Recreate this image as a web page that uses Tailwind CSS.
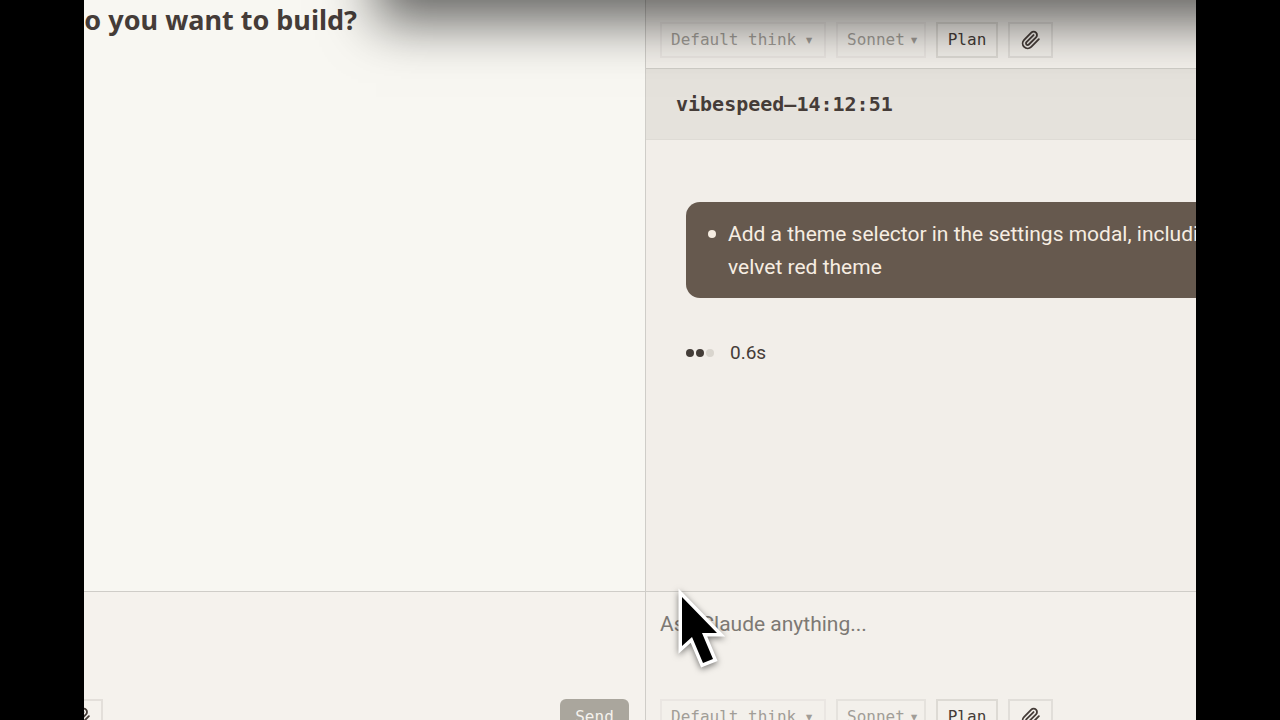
<!DOCTYPE html>
<html lang="en">
<head>
<meta charset="utf-8">
<meta name="viewport" content="width=device-width, initial-scale=1">
<title>vibespeed</title>
<script src="https://cdn.jsdelivr.net/npm/@tailwindcss/browser@4"></script>
</head>
<body class="bg-black font-['Roboto','Liberation_Sans',sans-serif] text-[#453c38]">
<svg class="hidden" aria-hidden="true">
  <symbol id="clip" viewBox="0 0 24 24" fill="none" stroke="currentColor" stroke-width="2.2" stroke-linecap="round" stroke-linejoin="round">
    <path d="m21.44 11.05-9.19 9.19a6 6 0 0 1-8.49-8.49l8.57-8.57A4 4 0 1 1 18 8.84l-8.59 8.57a2 2 0 0 1-2.83-2.83l8.49-8.48"/>
  </symbol>
</svg>
<div class="h-screen overflow-hidden px-[84px]">
  <div class="relative grid h-full grid-cols-[561fr_551fr] overflow-hidden bg-[#f8f7f2]">

    <section class="flex min-w-0 flex-col overflow-hidden">
      <div class="flex-1">
        <div class="flex w-[273px] justify-end pt-1">
          <h1 class="shrink-0 font-['Noto_Sans',sans-serif] text-[27px] leading-8 font-bold whitespace-nowrap">What do you want to build?</h1>
        </div>
      </div>
      <form class="h-[129px] shrink-0 border-t border-[#cfcdc8] bg-[#f5f2ed] pt-[107px] pr-4">
        <div class="-ml-[26px] flex justify-between">
          <button type="button" aria-label="Attach file" class="flex h-9 w-[45px] items-center justify-center border-2 border-[#9a9690]/20"><svg class="size-5"><use href="#clip"/></svg></button>
          <button type="submit" class="h-9 w-[69px] rounded-md bg-[#aaa69d] font-['DejaVu_Sans_Mono',monospace] text-base text-[#f5f2ed]">Send</button>
        </div>
      </form>
    </section>

    <section class="flex min-w-0 flex-col overflow-hidden border-l border-[#cfcdc8] bg-[#f2eee9]">
      <form class="flex h-[69px] shrink-0 items-end border-b border-[#cfccc6] bg-[#f3f0eb] pb-[10px] pl-[14px]">
        <div class="flex gap-[10px] font-['DejaVu_Sans_Mono',monospace] text-base">
          <label class="relative h-9 w-[166px] border-2 border-[#9a9690]/10 text-[#a19d97]">
            <select aria-label="Thinking mode" class="h-full w-full appearance-none pl-[9px]"><option>Default think</option></select>
            <span class="pointer-events-none absolute top-1 right-[10px] text-base leading-6">▾</span>
          </label>
          <label class="relative h-9 w-[90px] border-2 border-[#9a9690]/10 text-[#a19d97]">
            <select aria-label="Model" class="h-full w-full appearance-none pl-[9px]"><option>Sonnet</option></select>
            <span class="pointer-events-none absolute top-1 right-[5px] text-base leading-6">▾</span>
          </label>
          <button type="button" class="h-9 w-[62px] border-2 border-[#9a9690]/25">Plan</button>
          <button type="button" aria-label="Attach file" class="flex h-9 w-[45px] items-center justify-center border-2 border-[#9a9690]/20"><svg class="size-5"><use href="#clip"/></svg></button>
        </div>
      </form>

      <header class="flex h-[71px] shrink-0 items-center border-b border-[#dedbd5] bg-[#e5e2dc] pl-[30px]">
        <h2 class="font-['DejaVu_Sans_Mono',monospace] text-xl font-bold">vibespeed–14:12:51</h2>
      </header>

      <div class="flex-1 pt-[62px] pl-10">
        <div class="w-[640px] rounded-[14px] bg-[#66594e] pt-4 pb-[14px] pl-[22px] text-[21px] leading-[33px] whitespace-nowrap text-[#f6ede2]">
          <div class="flex gap-3">
            <span class="mt-3 size-2 shrink-0 rounded-full bg-[#f6ede2]"></span>
            <p>Add a theme selector in the settings modal, including a<br>velvet red theme</p>
          </div>
        </div>
        <div class="mt-[41px] flex h-7 items-center gap-4">
          <div class="flex gap-[2px]">
            <span class="size-2 rounded-full bg-[#443d38]"></span>
            <span class="size-2 rounded-full bg-[#443d38]"></span>
            <span class="size-2 rounded-full bg-[#d9d5ce]"></span>
          </div>
          <span class="text-[19px]">0.6s</span>
        </div>
      </div>

      <form class="h-[129px] shrink-0 border-t border-[#cfcdc8] bg-[#f3f0eb] pl-[14px]">
        <input type="text" aria-label="Message" placeholder="Ask Claude anything..." class="mt-[15px] block h-[34px] w-full text-[21px] outline-none placeholder:text-[#7d7974]">
        <div class="mt-[58px] flex gap-[10px] font-['DejaVu_Sans_Mono',monospace] text-base">
          <label class="relative h-9 w-[166px] border-2 border-[#9a9690]/10 text-[#a19d97]">
            <select aria-label="Thinking mode" class="h-full w-full appearance-none pl-[9px]"><option>Default think</option></select>
            <span class="pointer-events-none absolute top-1 right-[10px] text-base leading-6">▾</span>
          </label>
          <label class="relative h-9 w-[90px] border-2 border-[#9a9690]/15 text-[#a19d97]">
            <select aria-label="Model" class="h-full w-full appearance-none pl-[9px]"><option>Sonnet</option></select>
            <span class="pointer-events-none absolute top-1 right-[5px] text-base leading-6">▾</span>
          </label>
          <button type="button" class="h-9 w-[62px] border-2 border-[#9a9690]/25">Plan</button>
          <button type="button" aria-label="Attach file" class="flex h-9 w-[45px] items-center justify-center border-2 border-[#9a9690]/20"><svg class="size-5"><use href="#clip"/></svg></button>
        </div>
      </form>
    </section>

    <!-- Shadow cast by the window above -->
    <div class="pointer-events-none absolute -top-[200px] -right-[100px] left-[292px] h-[200px] shadow-[0_22px_50px_rgba(0,0,0,0.6)]"></div>

    <!-- Mouse pointer -->
    <svg class="pointer-events-none absolute top-[580px] left-[588px] h-[100px] w-[64px] overflow-visible drop-shadow-[0_2px_3px_rgba(0,0,0,0.5)]" viewBox="672 580 64 100">
      <path d="M682 597 L717 633 H702 L713 659 L703 663 L692 637 L682 646 Z" fill="#000" stroke="#fff" stroke-width="7" stroke-linejoin="miter" paint-order="stroke"/>
    </svg>
  </div>
</div>
</body>
</html>
